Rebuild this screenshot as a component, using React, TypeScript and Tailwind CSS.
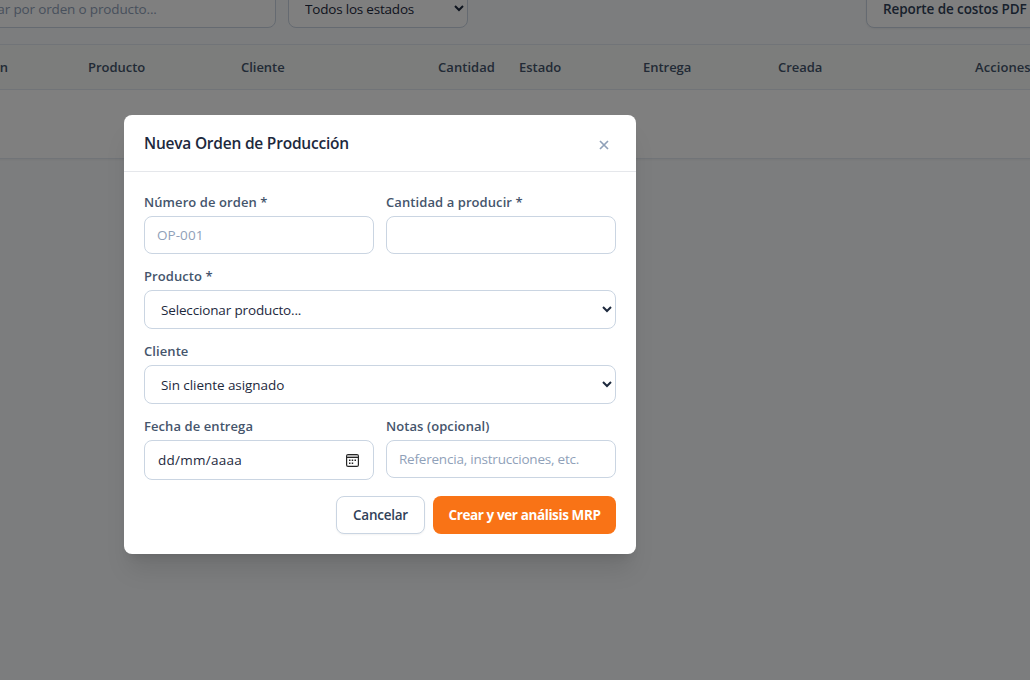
import type { ReactNode } from "react";
import { clsx } from "clsx";

const COLUMNS = [
  { label: "Orden", className: "pr-[68px] text-right" },
  { label: "Producto", className: "pl-3" },
  { label: "Cliente", className: "pl-3" },
  { label: "Cantidad", className: "pr-3 text-right tracking-[0.05px]" },
  { label: "Estado", className: "pl-3" },
  { label: "Entrega", className: "pl-3" },
  { label: "Creada", className: "pl-3" },
  { label: "Acciones", className: "pl-3 tracking-[0.08px]" },
];

const fieldClass =
  "block w-full rounded-lg border border-slate-300 bg-white px-3 text-[13.5px] outline-none";

export default function App() {
  return (
    <div className="relative h-[680px] w-[1030px] overflow-hidden bg-slate-50 font-['Open_Sans','Noto_Sans',sans-serif] text-slate-800">
      {/* Toolbar */}
      <div className="-mt-[11px] -ml-[45px] flex w-[1120px] items-start">
        <input
          placeholder="Buscar por orden o producto..."
          className={clsx(fieldClass, "h-[39px] w-[321px]! tracking-[-0.15px] placeholder:text-slate-400")}
        />
        <select className={clsx(fieldClass, "ml-3 h-[39px] w-[180px]! tracking-[-0.2px]")}>
          <option>Todos los estados</option>
        </select>
        <button className="ml-auto h-[39px] w-[209px] rounded-lg border border-slate-300 bg-white pt-0.5 pl-4 text-left text-[13.5px] font-semibold tracking-[-0.1px] whitespace-nowrap text-slate-700 shadow-xs">
          Reporte de costos PDF
        </button>
      </div>

      {/* Orders table */}
      <div className="mt-4 -ml-[60px] w-[1150px] border-y border-slate-200 bg-white shadow-xs">
        <div className="grid h-[45px] grid-cols-[136px_153px_178px_100px_124px_135px_197px_1fr] items-center border-b border-slate-200 bg-[#f8fbf8] pt-0.5 text-[13px] font-semibold tracking-[-0.03px] text-slate-600">
          {COLUMNS.map((col) => (
            <div key={col.label} className={col.className}>
              {col.label}
            </div>
          ))}
        </div>
        <div className="h-[68px]" />
      </div>

      {/* Modal */}
      <div className="absolute inset-0 flex items-start bg-black/50 pt-[115px] pl-[124px]">
        <div className="w-[512px] rounded-lg bg-white shadow-xl">
          <div className="flex h-[57px] items-center justify-between border-b border-gray-200 px-5">
            <h2 className="pt-0.5 text-[15.5px] font-semibold tracking-[-0.22px] text-slate-800">
              Nueva Orden de Producción
            </h2>
            <button aria-label="Cerrar" className="mt-1 mr-[7px] text-slate-400">
              <CloseIcon />
            </button>
          </div>

          <form className="space-y-3 p-5">
            <div className="grid grid-cols-2 gap-3">
              <Field label="Número de orden *">
                <input
                  placeholder="OP-001"
                  className={clsx(fieldClass, "h-[38px] tracking-[0.05px] placeholder:text-slate-400")}
                />
              </Field>
              <Field label="Cantidad a producir *">
                <input className={clsx(fieldClass, "h-[38px]")} />
              </Field>
            </div>

            <Field label="Producto *">
              <select className={clsx(fieldClass, "h-[39px] tracking-[-0.15px]")}>
                <option>Seleccionar producto...</option>
              </select>
            </Field>

            <Field label="Cliente">
              <select className={clsx(fieldClass, "h-[39px] tracking-[-0.06px]")}>
                <option>Sin cliente asignado</option>
              </select>
            </Field>

            <div className="grid grid-cols-2 items-start gap-3">
              <Field label="Fecha de entrega">
                <div className={clsx(fieldClass, "flex! h-[40px] items-center justify-between pl-[13px]!")}>
                  <span className="tracking-[0.25px]">dd/mm/aaaa</span>
                  <CalendarIcon />
                </div>
              </Field>
              <Field label="Notas (opcional)">
                <input
                  placeholder="Referencia, instrucciones, etc."
                  className={clsx(fieldClass, "h-[38px] tracking-[-0.21px] placeholder:text-slate-400")}
                />
              </Field>
            </div>

            <div className="flex justify-end gap-2 pt-1 text-[13.5px] whitespace-nowrap">
              <button
                type="button"
                className="h-[38px] w-[89px] rounded-lg border border-slate-300 bg-white font-semibold tracking-[-0.25px] text-slate-700 shadow-xs"
              >
                Cancelar
              </button>
              <button
                type="button"
                className="h-[38px] w-[183px] rounded-lg bg-[#f97316] font-bold tracking-[-0.4px] text-white"
              >
                Crear y ver análisis MRP
              </button>
            </div>
          </form>
        </div>
      </div>
    </div>
  );
}

function Field({ label, children }: { label: string; children: ReactNode }) {
  return (
    <label className="block">
      <span className="mb-1 block h-5 text-[13px] leading-5 font-semibold tracking-[0.08px] text-slate-600">
        {label}
      </span>
      {children}
    </label>
  );
}

function CloseIcon() {
  return (
    <svg width="10" height="10" viewBox="0 0 10 10" fill="none" stroke="currentColor" strokeWidth="1.7">
      <path d="M1 1l8 8M9 1l-8 8" />
    </svg>
  );
}

function CalendarIcon() {
  return (
    <svg width="13" height="13" viewBox="0 0 13 13" className="mr-[2px] text-neutral-800" fill="none">
      <rect x="0.600" y="0.600" width="11.800" height="11.800" rx="1.500" stroke="currentColor" strokeWidth="1.200" />
      <path d="M1.200 1.500h10.600v1H1.200z" className="fill-neutral-400" />
      <path d="M1 2.800h11v1.200H1z" fill="currentColor" />
      <path
        d="M3 5.500h1.500V7H3zM5.700 5.500h1.500V7H5.700zM8.500 5.500H10V7H8.500zM3 8.500h1.500V10H3zM5.700 8.500h1.500V10H5.700z"
        fill="currentColor"
      />
    </svg>
  );
}
